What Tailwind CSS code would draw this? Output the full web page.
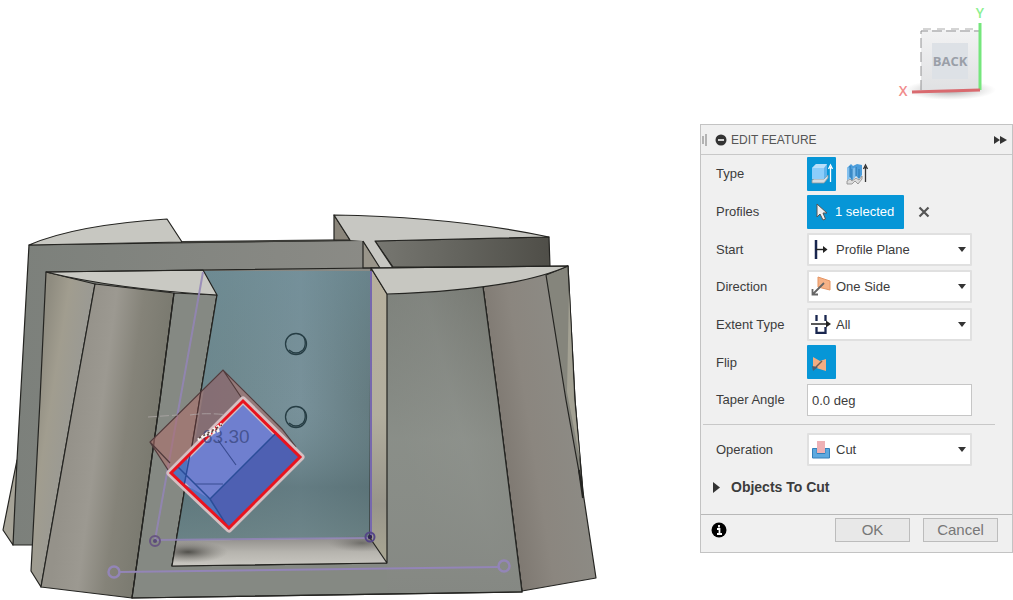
<!DOCTYPE html>
<html lang="en">
<head>
<meta charset="utf-8">
<meta name="viewport" content="width=device-width, initial-scale=1">
<title>Edit Feature</title>
<script src="https://cdn.jsdelivr.net/npm/@tailwindcss/browser@4"></script>
</head>
<body class="bg-white font-['Liberation_Sans',Arial,sans-serif] text-[13px] text-[#3c3c3c]">
<main class="flex min-h-screen items-start">

<section class="min-w-0 flex-1" aria-label="Model canvas">
<svg class="block w-full" viewBox="0 0 700 600" role="img" aria-label="Model with a cut profile selected">
  <defs>
    <linearGradient id="wall"><stop offset="0" stop-color="#7c807b"/><stop offset="1" stop-color="#8b8b86"/></linearGradient>
    <linearGradient id="side" gradientUnits="userSpaceOnUse" x1="32" y1="400" x2="95" y2="410"><stop offset="0" stop-color="#8f8c80"/><stop offset=".3" stop-color="#a19d8f"/><stop offset=".65" stop-color="#9b9a93"/><stop offset="1" stop-color="#8c8c87"/></linearGradient>
    <linearGradient id="face" gradientUnits="userSpaceOnUse" x1="75" y1="400" x2="165" y2="412"><stop offset="0" stop-color="#95928a"/><stop offset=".3" stop-color="#9c9991"/><stop offset=".6" stop-color="#858379"/><stop offset="1" stop-color="#78786e"/></linearGradient>
    <linearGradient id="front" gradientUnits="userSpaceOnUse" x1="387" y1="380" x2="500" y2="350"><stop offset="0" stop-color="#858a84"/><stop offset=".5" stop-color="#8d918c"/><stop offset="1" stop-color="#7b7d76"/></linearGradient>
    <linearGradient id="down" x1="0" y1="0" x2="0" y2="1"><stop offset="0" stop-color="#757872" stop-opacity=".5"/><stop offset=".5" stop-color="#8d918b" stop-opacity=".6"/><stop offset="1" stop-color="#858883"/></linearGradient>
    <linearGradient id="right" gradientUnits="userSpaceOnUse" x1="490" y1="420" x2="585" y2="405"><stop offset="0" stop-color="#7c766f"/><stop offset=".4" stop-color="#8b867f"/><stop offset="1" stop-color="#8d8c86"/></linearGradient>
    <linearGradient id="blue"><stop offset="0" stop-color="#69858c"/><stop offset=".3" stop-color="#6f898f"/><stop offset=".65" stop-color="#78919a"/><stop offset="1" stop-color="#647b80"/></linearGradient>
    <linearGradient id="shade" x1="0" y1="0" x2="0" y2="1"><stop offset="0" stop-color="#6f8f9a" stop-opacity=".4"/><stop offset=".5" stop-color="#6d888e" stop-opacity="0"/><stop offset=".8" stop-color="#566e73" stop-opacity=".6"/><stop offset="1" stop-color="#6a8183" stop-opacity=".7"/></linearGradient>
    <linearGradient id="floor" x1="0" y1="0" x2="0" y2="1"><stop offset="0" stop-color="#918f8b"/><stop offset=".5" stop-color="#b6b4ae"/><stop offset="1" stop-color="#c9c7c1"/></linearGradient>
    <radialGradient id="dark"><stop offset="0" stop-color="#454440" stop-opacity=".9"/><stop offset="1" stop-color="#777570" stop-opacity="0"/></radialGradient>
    <linearGradient id="strip"><stop offset="0" stop-color="#777771"/><stop offset=".5" stop-color="#63635d"/><stop offset="1" stop-color="#4f4e48"/></linearGradient>
    <linearGradient id="jamb" x1="0" y1="0" x2="0" y2="1"><stop offset="0" stop-color="#b7b09d"/><stop offset=".5" stop-color="#b2ae9e"/><stop offset=".8" stop-color="#98958a"/><stop offset="1" stop-color="#aaa793"/></linearGradient>
    <clipPath id="pocket"><path d="M203 271H371V538L387 563L172 566L217 295Z"/></clipPath>
  </defs>
  <g stroke="#242421" stroke-width="1.2" stroke-linejoin="round">
    <path d="M17 460L3 530L13 545L20 500Z" fill="#a6a397"/>
    <path d="M29 245L371 240L376 276L60 300L45 545H13L17 460Z" fill="url(#wall)"/>
    <path d="M29 245Q75 225 167 219L182 242Z" fill="#c7c7c1"/>
    <path d="M182 242L363 240" stroke="#3b3b37" stroke-width="2"/>
    <path d="M334 215L350 240H334Z" fill="#8a857a"/>
    <path d="M363 241L381 268H363Z" fill="#99958a"/>
    <path d="M375 241L549 237L550 267H393Z" fill="url(#strip)"/>
    <path d="M363 241L350 240L334 215Q455 217 549 237L375 241L393 268H380Z" fill="#c7c7c2" stroke="none"/>
    <path d="M350 240L334 215Q455 217 549 237L375 241L393 268M363 241L380 268" fill="none"/>
    <path d="M568 266L575 400L583 492L596 578L522 591L498 400L483 287Z" fill="url(#right)"/>
    <path d="M568 266L546 275L566 400L583 494L575 400Z" fill="#85857c"/>
    <path d="M569 290L574 400L580 460L567 392Z" fill="#a3a193" stroke="none"/>
    <path d="M46 272L40 400L31 571L41 587L74 400L95 284Z" fill="url(#side)"/>
    <path d="M95 284L74 400L41 587L132 598L160 400L174 293Z" fill="url(#face)"/>
    <path d="M174 293L160 400L132 598L522 592L498 400L483 287L387 294V563L172 566L217 295Z" fill="#858983"/>
    <path d="M387 294L483 287L498 400L522 591L387 593Z" fill="url(#front)" stroke="none"/>
    <path d="M387 294L483 287L498 400L522 591L387 593Z" fill="url(#down)" stroke="none"/>
    <path d="M174 293L160 400L132 598L522 592L498 400L483 287M217 295L172 566" fill="none"/>
    <g clip-path="url(#pocket)" stroke="none">
      <path d="M203 271H371V538L170 541Z" fill="url(#blue)"/>
      <path d="M203 271H371V538L170 541Z" fill="url(#shade)"/>
      <path d="M160 541L371 538L390 566H160Z" fill="url(#floor)"/>
      <ellipse cx="188" cy="552" rx="40" ry="11" fill="url(#dark)"/>
      <ellipse cx="362" cy="543" rx="34" ry="9" fill="url(#dark)" opacity=".6"/>
    </g>
    <path d="M371 268L387 294V563L370 538Z" fill="url(#jamb)"/>
    <path d="M387 563L172 566L217 295" fill="none"/>
    <path d="M46 272L203 270L217 295Q115 289 46 272Z" fill="#c9c9c3"/>
    <path d="M371 268L568 266Q515 290 387 294Z" fill="#c7c7c1"/>
    <path d="M46 272L371 268L568 266" fill="none"/>
    <path d="M579 470L583 498" stroke-width="2"/>
  </g>
  <g fill="none" stroke="#263d44" stroke-width="1.3">
    <circle cx="296" cy="344" r="10.5"/><path d="M289 350Q296 356 303 350Q307 345 304 337"/>
    <circle cx="296" cy="417" r="10.5"/><path d="M289 423Q296 429 303 423Q307 418 304 410"/>
  </g>
  <g fill="none" stroke="#9385b7" stroke-width="2">
    <path d="M203 272L155 540L370 538" stroke-opacity=".85"/>
    <path d="M371 271V538" stroke="#7768ae"/>
    <path d="M119 572L500 567"/>
    <circle cx="114" cy="572" r="5.5" stroke-width="2.5"/><circle cx="504" cy="566" r="5.5" stroke-width="2.5"/>
    <circle cx="155" cy="541" r="5" stroke="#685681"/><circle cx="370" cy="537" r="4.5" stroke="#554687"/>
  </g>
  <circle cx="155" cy="541" r="2" fill="#594b76"/><circle cx="370" cy="537" r="2.2" fill="#312452"/>
  <path d="M223 370L150 442L170 473L243 400L301 457L282 429Z" fill="#ad706c" fill-opacity=".6"/>
  <path d="M204 389L223 370L243 400L194 448Z" fill="#6d5b69" fill-opacity=".35"/>
  <path d="M170 473L150 442L223 370L282 429L296 447M223 370L243 400M150 442L170 463" fill="none" stroke="#513b3c" stroke-width="1.2"/>
  <path d="M201 391L191 452" stroke="#452e30"/>
  <path d="M148 417L178 415M190 415Q208 412 237 416" stroke="#b4acac" stroke-opacity=".7" fill="none" stroke-dasharray="9 3"/>
  <path d="M243 400L301 457L229 529L170 473Z" fill="#6f7fcf" stroke="#d5bfc2" stroke-width="7" stroke-linejoin="round"/>
  <path d="M276 433L301 457L229 529L210 499Z" fill="#4e60b2"/>
  <path d="M170 473L188 456L184 484L210 499L229 529Z" fill="#4f74bd"/>
  <path d="M276 433L210 499L178 467M210 499L229 529M190 454L184 486" fill="none" stroke="#2b4d99" stroke-width="1.5"/>
  <path d="M195 484H223M218 440L236 465" stroke="#394c91" stroke-width="1.2"/>
  <path d="M243 401L300 457L229 528L171 473Z" fill="none" stroke="#e9131e" stroke-width="3"/>
  <text x="202" y="443" font-size="19" fill="#344177" fill-opacity=".7">63.30</text>
  <path d="M198 440L222 424M204 436L220 430" stroke="#f8f3f0" stroke-width="3" fill="none" stroke-dasharray="3 1.5"/>
  <path d="M199 438L222 425M207 435L217 429" stroke="#58443e" stroke-width="1.5" stroke-dasharray="2 3"/>
</svg>
</section>

<aside class="w-[313px] shrink-0">
<svg class="ml-auto block h-[124px] w-[123px]" viewBox="0 0 123 124" role="img" aria-label="View cube, back view">
  <defs>
    <linearGradient id="cube" x1="0" y1="0" x2="0" y2="1"><stop offset="0" stop-color="#f2f2f3"/><stop offset="1" stop-color="#e0e1e3"/></linearGradient>
    <radialGradient id="shadow"><stop offset="0" stop-color="#777" stop-opacity=".7"/><stop offset="1" stop-color="#aaa" stop-opacity="0"/></radialGradient>
  </defs>
  <ellipse cx="60" cy="90" rx="46" ry="10" fill="url(#shadow)"/>
  <path d="M31 30H90V90H31Z" fill="url(#cube)"/>
  <path d="M31 90V31H89" fill="none" stroke="#929294" stroke-dasharray="10 4"/>
  <path d="M33 29H88" stroke="#aaa" stroke-dasharray="8 6"/>
  <path d="M42 43H78V79H42Z" fill="#dde1e6"/>
  <g font-family="Open Sans, sans-serif" text-anchor="middle">
    <text x="60" y="66" font-size="13" font-weight="700" fill="#9a9fa8">BACK</text>
    <text x="90" y="18" font-size="14" font-weight="600" fill="#8cf08f">Y</text>
    <text x="13" y="96" font-size="14" font-weight="600" fill="#f18c8c">X</text>
  </g>
  <path d="M90 23V90" stroke="#75e67c" stroke-width="3"/>
  <path d="M22 92L90 90" stroke="#d96a6f" stroke-width="3"/>
</svg>

<form class="border border-[#c3c3c3] bg-[#f0f0f0]" onsubmit="return false">
  <header class="flex h-[30px] items-center border-b border-[#c8c8c8] pr-[5px] pl-px">
    <svg class="h-4 w-[5px]" viewBox="0 0 5 16" aria-hidden="true"><path d="M1 4V12M4 2V14" stroke="#777"/></svg>
    <button type="button" class="ml-2 flex size-3" aria-label="Collapse"><svg viewBox="0 0 12 12" aria-hidden="true"><circle cx="6" cy="6" r="5.500" fill="#333"/><path d="M3 6H9" stroke="#f0f0f0" stroke-width="1.700"/></svg></button>
    <h1 class="ml-1 flex-1 text-xs text-[#555]">EDIT FEATURE</h1>
    <button type="button" aria-label="Expand"><svg class="h-2 w-[13px]" viewBox="0 0 13 8" aria-hidden="true"><path d="M0 0L6 4L0 8ZM6 0L13 4L6 8Z" fill="#333"/></svg></button>
  </header>

  <div class="grid h-[264px] grid-cols-[91px_1fr] grid-rows-7 items-center pr-10 pl-[15px]">
    <span id="type-label">Type</span>
    <div class="flex gap-[6px]" role="group" aria-labelledby="type-label">
      <button type="button" class="flex h-[34px] w-[29px] items-center justify-center rounded-[1px] bg-[#0696d7]" aria-label="Extrude" aria-pressed="true">
        <svg class="h-6 w-6" viewBox="0 0 24 24" aria-hidden="true"><path d="M2 18L4 17H14L18 13V16L14 21H2Z" fill="#d6dde2" stroke="#8c989f" stroke-width=".8"/><path d="M2 6L6 2H17V14L14 17H2Z" fill="#60b3ec"/><path d="M2 6L6 2H17L14 6Z" fill="#b9e0fa"/><path d="M2 6H14V17H2Z" fill="#8bcdfb"/><path d="M20.500 20V5M18.500 7L20.500 3L22.500 7" stroke="#fff" stroke-width="1.300" fill="none"/></svg>
      </button>
      <button type="button" class="flex h-[34px] w-[29px] items-center justify-center" aria-label="Thin extrude" aria-pressed="false">
        <svg class="h-6 w-6" viewBox="0 0 24 24" aria-hidden="true"><path d="M2 19L5 17L7 19L11 16L14 18L17 14V17L13 22L10 19L7 22H2Z" fill="#ddd" stroke="#888" stroke-width=".8"/><path d="M2 6L6 2L8 4L12 2L17 3V13L14 17L11 14L7 18L5 16L2 18Z" fill="#4b9ddb"/><path d="M2 6L5 5V16L2 18ZM7 7L11 5V14L7 18Z" fill="#82c0ee"/><path d="M5 4V15M7 7V18M11 5V14M14 7V16" stroke="#2876b2"/><path d="M20.500 20V5M18.500 7L20.500 3L22.500 7" stroke="#333" stroke-width="1.300" fill="none"/></svg>
      </button>
    </div>

    <span id="profiles-label">Profiles</span>
    <div class="flex items-center gap-[14px]" role="group" aria-labelledby="profiles-label">
      <button type="button" class="flex h-[34px] w-[97px] items-center gap-1 rounded-[1px] bg-[#0696d7] pl-2 whitespace-nowrap text-white"><svg class="h-5 w-4" viewBox="0 0 16 20" aria-hidden="true"><path d="M2 2V15L5 12L8 18L10.500 17L8 11H12Z" fill="#f0f0f0" stroke="#555"/></svg>1 selected</button>
      <button type="button" aria-label="Clear selection"><svg class="size-3" viewBox="0 0 12 12" aria-hidden="true"><path d="M1.500 1.500L10.500 10.500M10.500 1.500L1.500 10.500" stroke="#555" stroke-width="2.200"/></svg></button>
    </div>

    <label for="start">Start</label>
    <div class="relative w-[165px]">
      <select id="start" class="block h-[33px] w-full appearance-none rounded-[1px] border-2 border-[#e0e0e0] bg-white pl-[27px]"><option>Profile Plane</option></select>
      <svg class="pointer-events-none absolute top-[6px] left-1 size-5" viewBox="0 0 20 20" aria-hidden="true"><path d="M5 1V20" stroke="#19264f" stroke-width="2.500"/><path d="M5 10.500H14" stroke="#222" stroke-width="1.400"/><path d="M12 7L16.500 10.500L12 14Z" fill="#222"/></svg>
      <svg class="pointer-events-none absolute top-[14px] right-[6px] h-[5px] w-2" viewBox="0 0 8 5" aria-hidden="true"><path d="M0 0H8L4 5Z" fill="#333"/></svg>
    </div>

    <label for="direction">Direction</label>
    <div class="relative w-[165px]">
      <select id="direction" class="block h-[33px] w-full appearance-none rounded-[1px] border-2 border-[#e0e0e0] bg-white pl-[27px]"><option>One Side</option></select>
      <svg class="pointer-events-none absolute top-[6px] left-1 size-5" viewBox="0 0 20 20" aria-hidden="true"><path d="M7 1L19 5V14L7 11Z" fill="#f6b287" stroke="#e69563"/><path d="M13 7L2 18M1.500 13V18.500H7" stroke="#666" stroke-width="1.800" fill="none"/></svg>
      <svg class="pointer-events-none absolute top-[14px] right-[6px] h-[5px] w-2" viewBox="0 0 8 5" aria-hidden="true"><path d="M0 0H8L4 5Z" fill="#333"/></svg>
    </div>

    <label for="extent">Extent Type</label>
    <div class="relative w-[165px]">
      <select id="extent" class="block h-[33px] w-full appearance-none rounded-[1px] border-2 border-[#e0e0e0] bg-white pl-[27px]"><option>All</option></select>
      <svg class="pointer-events-none absolute top-[6px] left-1 size-5" viewBox="0 0 20 20" aria-hidden="true"><path d="M5.500 1V7M14.500 1V7M5.500 13V19H14.500V13" stroke="#19264f" stroke-width="2.300" fill="none"/><path d="M0 10H17" stroke="#222" stroke-width="1.500"/><path d="M15 6.500L20 10L15 13.500Z" fill="#222"/></svg>
      <svg class="pointer-events-none absolute top-[14px] right-[6px] h-[5px] w-2" viewBox="0 0 8 5" aria-hidden="true"><path d="M0 0H8L4 5Z" fill="#333"/></svg>
    </div>

    <span id="flip-label">Flip</span>
    <button type="button" class="flex h-[34px] w-[29px] items-center justify-center rounded-[1px] bg-[#0696d7]" aria-labelledby="flip-label"><svg class="size-5" viewBox="0 0 20 20" aria-hidden="true"><path d="M1 5L8 9L14 7V19L1 15Z" fill="#f3ad82"/><path d="M10 9L4 15" stroke="#765c51" stroke-width="1.500"/><path d="M0 14L6 15L1 19Z" fill="#4c6073"/></svg></button>

    <label for="taper">Taper Angle</label>
    <input id="taper" type="text" value="0.0 deg" class="h-8 w-[165px] border border-[#c6c6c6] bg-white px-1">
  </div>

  <hr class="mt-[5px] mr-[17px] ml-[2px] border-[#c8c8c8]">

  <div class="grid grid-cols-[91px_1fr] items-center pt-[8px] pr-10 pl-[15px]">
    <label for="operation">Operation</label>
    <div class="relative w-[165px]">
      <select id="operation" class="block h-[33px] w-full appearance-none rounded-[1px] border-2 border-[#e0e0e0] bg-white pl-[27px]"><option>Cut</option></select>
      <svg class="pointer-events-none absolute top-[6px] left-1 size-5" viewBox="0 0 20 20" aria-hidden="true"><path d="M1.500 9.500H6V14.500H14V9.500H18.500V19H1.500Z" fill="#5da9df" stroke="#347fb9"/><path d="M6 2H14V14H6Z" fill="#eeb1b5"/></svg>
      <svg class="pointer-events-none absolute top-[14px] right-[6px] h-[5px] w-2" viewBox="0 0 8 5" aria-hidden="true"><path d="M0 0H8L4 5Z" fill="#333"/></svg>
    </div>
  </div>

  <button type="button" class="mt-[6px] flex h-[30px] items-center gap-[11px] pl-3 text-sm font-bold" aria-expanded="false"><svg class="h-[11px] w-[7px]" viewBox="0 0 7 11" aria-hidden="true"><path d="M0 0L7 5.500L0 11Z" fill="#333"/></svg>Objects To Cut</button>

  <footer class="mt-3 flex items-center border-t border-[#b8b8b8] pt-[3px] pr-[14px] pb-[10px] pl-[10px] text-[15px] text-[#777]">
    <button type="button" class="mr-auto" aria-label="Information"><svg class="size-4" viewBox="0 0 16 16" aria-hidden="true"><circle cx="8" cy="8" r="7.500" fill="#000"/><path d="M8 3V5.500M6 7H8.500V12M6 12H11" stroke="#fff" stroke-width="1.800" fill="none"/></svg></button>
    <button type="button" class="h-6 w-[75px] border border-[#bcbcbc] bg-[#e8e8e8]">OK</button>
    <button type="button" class="ml-[13px] h-6 w-[75px] border border-[#bcbcbc] bg-[#e8e8e8]">Cancel</button>
  </footer>
</form>
</aside>
</main>
</body>
</html>
